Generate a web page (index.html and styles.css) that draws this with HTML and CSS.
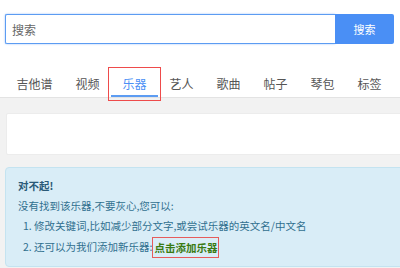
FILE: index.html
```html
<!DOCTYPE html>
<html lang="zh-CN">
<head>
<meta charset="utf-8">
<link rel="stylesheet" href="styles.css">
</head>
<body>
<div class="top">
  <form class="search">
    <input class="search-input" type="text" placeholder="搜索">
    <button class="search-btn" type="button">搜索</button>
  </form>
  <ul class="tabs">
    <li class="tab">吉他谱</li>
    <li class="tab">视频</li>
    <li class="tab active">乐器<span class="mark"></span></li>
    <li class="tab">艺人</li>
    <li class="tab">歌曲</li>
    <li class="tab">帖子</li>
    <li class="tab">琴包</li>
    <li class="tab">标签</li>
  </ul>
</div>
<div class="main">
  <div class="blank"></div>
  <div class="alert">
    <p class="title">对不起!</p>
    <p>没有找到该乐器,不要灰心,您可以:</p>
    <ol class="tips">
      <li>修改关键词,比如减少部分文字,或尝试乐器的英文名/中文名</li>
      <li>还可以为我们添加新乐器:<a class="add" href="#">点击添加乐器</a></li>
    </ol>
  </div>
</div>
</body>
</html>
```

FILE: styles.css
```css
html, body {
  margin: 0;
  padding: 0;
  height: 100%;
  overflow: hidden;
}
body {
  font-family: "Noto Sans CJK SC", "Noto Sans", sans-serif;
  background: #f2f2f2;
  color: #555;
}
.top {
  background: #fff;
}
.search {
  display: flex;
  margin: 0;
  padding: 14px 6px 0 5px;
  height: 30px;
}
.search-input {
  flex: 1;
  box-sizing: border-box;
  height: 30px;
  margin: 0;
  border: 1px solid #5c9cf2;
  border-right: none;
  border-radius: 2px 0 0 2px;
  box-shadow: 0 0 2px rgba(74, 144, 245, 0.6);
  padding: 0 6px;
  font-family: inherit;
  font-size: 12px;
  color: #333;
  outline: none;
}
.search-input::placeholder {
  color: #666;
}
.search-btn {
  width: 59px;
  height: 30px;
  margin: 0;
  border: none;
  border-radius: 0 2px 2px 0;
  background: #4a8ff5;
  color: #fff;
  font-family: inherit;
  font-size: 11px;
  padding: 0;
}
.tabs {
  list-style: none;
  margin: 0;
  padding: 22px 0 0 5px;
  display: flex;
  border-bottom: 1px solid #e3e3e3;
}
.tab {
  position: relative;
  padding: 11px 11.5px 4px;
  line-height: 14px;
  font-size: 12px;
  color: #555;
  border-bottom: 2px solid transparent;
}
.tab.active {
  color: #4a8ff5;
  border-bottom-color: #5c9cf2;
}
.mark {
  position: absolute;
  top: 1px;
  left: -3px;
  right: -3px;
  bottom: -6px;
  border: 1px solid #ee4b4b;
}
.main {
  padding: 15px 0 0 5px;
}
.blank {
  height: 40px;
  margin-left: 1px;
  margin-right: -10px;
  background: #fff;
  border: 1px solid #ececec;
  border-radius: 2px;
}
.alert {
  margin-top: 12px;
  margin-right: -10px;
  background: #d9edf7;
  border: 1px solid #c4e3f0;
  border-radius: 4px;
  padding: 8px 12px 8px;
  color: #31708f;
  font-size: 10.5px;
  line-height: 20px;
}
.alert p {
  margin: 0;
}
.alert .title {
  font-weight: bold;
  color: #2b5a78;
}
.tips {
  margin: 0;
  padding-left: 16px;
}
.tips li {
  line-height: 20.5px;
}
.add {
  display: inline-block;
  line-height: 19px;
  padding: 0 1px;
  border: 1px solid #e65c5c;
  color: #3a7a12;
  font-weight: bold;
  text-decoration: none;
  vertical-align: middle;
}
```
